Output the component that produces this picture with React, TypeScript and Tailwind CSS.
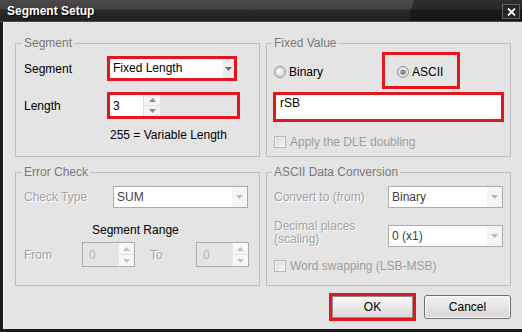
import React from 'react';

const red = 'border-[3px] border-[#e3161e]';
const dim = 'text-[#a3a3a3] [text-shadow:1px_1px_0_#ffffff]';

function Tri({ dir, color }: { dir: 'up' | 'down'; color: string }) {
  return (
    <svg width="7" height="4" viewBox="0 0 7 4">
      <path d={dir === 'up' ? 'M0 4 L3.5 0 L7 4 Z' : 'M0 0 L7 0 L3.5 4 Z'} fill={color} />
    </svg>
  );
}

function Radio({ checked }: { checked?: boolean }) {
  const id = checked ? 'rg-on' : 'rg-off';
  return (
    <svg width="12" height="12" viewBox="0 0 12 12" className="shrink-0">
      <defs>
        <radialGradient id={id} cx="0.4" cy="0.35" r="0.7">
          <stop offset="0" stopColor="#ffffff" />
          <stop offset="1" stopColor="#d6d6d6" />
        </radialGradient>
      </defs>
      <circle cx="6" cy="6" r="5.5" fill="#f2f2f2" stroke="#8c8c8c" />
      <circle cx="6" cy="6" r="4.2" fill={`url(#${id})`} stroke="#c4c4c4" strokeWidth="0.6" />
      {checked && <circle cx="6" cy="6" r="2.6" fill="#7a7a7a" />}
      {checked && <circle cx="5.6" cy="5.6" r="1.1" fill="#a8a8a8" />}
    </svg>
  );
}

function Check() {
  return (
    <div className="w-[12px] h-[12px] shrink-0 border border-[#b9b9b9] bg-[#f0f0f0] p-[1px]">
      <div className="w-full h-full bg-gradient-to-br from-[#dedede] to-[#f2f2f2]" />
    </div>
  );
}

function Combo({ text, className }: { text: string; className: string }) {
  return (
    <div className={`flex h-[22px] border border-[#acacac] bg-white ${className}`}>
      <div className="flex-1 flex items-center pl-[3px] text-[#3f3f3f]">{text}</div>
      <div className="w-[16px] flex items-center justify-center bg-[#f5f5f5] border-l border-white">
        <Tri dir="down" color="#b9b9b9" />
      </div>
    </div>
  );
}

function Spin() {
  return (
    <div className="flex w-[53px] h-[25px] border border-[#adadad]">
      <div className="flex-1 flex items-center pl-[6px] text-[#b4b4b4]">0</div>
      <div className="w-[16px] flex flex-col bg-[#f7f7f7] border-l border-[#e8e8e8]">
        <div className="flex-1 flex items-center justify-center border-b border-[#e2e2e2]">
          <Tri dir="up" color="#c2c2c2" />
        </div>
        <div className="flex-1 flex items-center justify-center">
          <Tri dir="down" color="#c2c2c2" />
        </div>
      </div>
    </div>
  );
}

function Group({ title, pad, children }: { title: string; pad: string; children: React.ReactNode }) {
  return (
    <fieldset className={`h-[121px] border border-[#bfbfbf] ${pad}`}>
      <legend className="px-[2px] -ml-[2px] leading-[14px] text-[#7a7a7a]">{title}</legend>
      {children}
    </fieldset>
  );
}

export default function App() {
  return (
    <div className="w-[522px] h-[332px] flex flex-col bg-[#1c1c1c] overflow-hidden font-['Liberation_Sans',Arial,sans-serif] text-[12px] text-black">
      {/* title bar */}
      <div className="relative h-[22px] shrink-0 flex items-center bg-[linear-gradient(to_bottom,#2e2e2e_0px,#292929_9px,#1b1b1b_10px,#171717_21px)] border-b border-[#4a4a4a]">
        <div className="absolute inset-0 [clip-path:polygon(0_0,414px_0,408px_100%,0_100%)] bg-[linear-gradient(to_bottom,#4a4a4a_0px,#404040_9px,#2a2a2a_10px,#222222_21px)]" />
        <span className="relative ml-[7px] font-bold text-white [text-shadow:1px_1px_0_#000000]">Segment Setup</span>
        <div className="absolute right-[2px] top-[4px] w-[18px] h-[15px] border border-[#606060] bg-[#262626] flex items-center justify-center">
          <svg width="9" height="8" viewBox="0 0 9 8">
            <path d="M1 0.5 L8 7.5 M8 0.5 L1 7.5" stroke="#ffffff" strokeWidth="1.8" />
          </svg>
        </div>
      </div>

      {/* client area */}
      <div className="flex-1 ml-[3px] mb-[3px] bg-[#e4e4e4] border-l border-[#f2f2f2] pl-[11px] pr-[11px] pt-[14px]">
        <div className="flex gap-[6px]">
          {/* left column */}
          <div className="w-[245px] flex flex-col gap-[8px]">
            <Group title="Segment" pad="pl-[8px]">
              <div className="flex items-center mt-[6px]">
                <span className="w-[83px]">Segment</span>
                <div className={`w-[130px] h-[25px] ${red} flex bg-white`}>
                  <span className="flex-1 pl-[3px] leading-[19px]">Fixed Length</span>
                  <div className="w-[12px] bg-[#ececec] border-l border-[#f8f8f8] flex items-center justify-center">
                    <Tri dir="down" color="#6a6a6a" />
                  </div>
                </div>
              </div>
              <div className="flex items-center mt-[11px]">
                <span className="w-[83px]">Length</span>
                <div className={`w-[133px] h-[27px] ${red} flex`}>
                  <div className="w-[33px] bg-white pl-[3px] flex items-center">3</div>
                  <div className="w-[17px] flex flex-col bg-[#f4f4f4] border-l border-[#dedede]">
                    <div className="flex-1 flex items-center justify-center border-b border-[#dedede]">
                      <Tri dir="up" color="#8a8a8a" />
                    </div>
                    <div className="flex-1 flex items-center justify-center">
                      <Tri dir="down" color="#8a8a8a" />
                    </div>
                  </div>
                </div>
              </div>
              <div className="mt-[9px] pl-[86px] leading-[14px]">255 = Variable Length</div>
            </Group>

            <Group title="Error Check" pad="pl-[8px]">
              <div className="flex items-center mt-[7px]">
                <span className={`w-[89px] ${dim}`}>Check Type</span>
                <Combo text="SUM" className="w-[135px]" />
              </div>
              <div className="mt-[15px] pl-[68px] leading-[14px]">Segment Range</div>
              <div className="flex items-center mt-[5px]">
                <span className={`w-[58px] ${dim}`}>From</span>
                <Spin />
                <span className={`ml-[15px] w-[46px] ${dim}`}>To</span>
                <Spin />
              </div>
            </Group>
          </div>

          {/* right column */}
          <div className="w-[245px] flex flex-col gap-[8px]">
            <Group title="Fixed Value" pad="pl-[7px]">
              <div className="flex items-center mt-[2px] h-[37px]">
                <div className="w-[108px] flex items-center gap-[3px] pt-[2px]">
                  <Radio />
                  <span>Binary</span>
                </div>
                <div className={`w-[78px] h-[37px] ${red} flex items-center gap-[3px] pl-[12px] pt-[2px]`}>
                  <Radio checked />
                  <span>ASCII</span>
                </div>
              </div>
              <div className={`mt-[3px] -ml-[1px] w-[231px] h-[30px] ${red} bg-white pl-[4px] pt-[1px] leading-[14px]`}>
                rSB
              </div>
              <div className="flex items-center mt-[14px] h-[12px]">
                <Check />
                <span className="ml-[4px] text-[#9e9e9e]">Apply the DLE doubling</span>
              </div>
            </Group>

            <Group title="ASCII Data Conversion" pad="pl-[7px]">
              <div className="flex items-center mt-[7px]">
                <span className={`w-[114px] ${dim}`}>Convert to (from)</span>
                <Combo text="Binary" className="w-[115px]" />
              </div>
              <div className="flex items-start mt-[12px]">
                <span className={`w-[114px] leading-[13px] ${dim}`}>
                  Decimal places
                  <br />
                  (scaling)
                </span>
                <Combo text="0 (x1)" className="w-[115px] mt-[5px]" />
              </div>
              <div className="flex items-center mt-[13px] h-[12px]">
                <Check />
                <span className="ml-[4px] text-[#9e9e9e]">Word swapping (LSB-MSB)</span>
              </div>
            </Group>
          </div>
        </div>

        {/* buttons */}
        <div className="flex justify-end items-center gap-[8px] mt-[7px]">
          <div className={`w-[87px] h-[28px] ${red}`}>
            <div className="w-full h-full border border-[#8f8f8f] bg-gradient-to-b from-[#f7f7f7] to-[#dadada] flex items-center justify-center">
              OK
            </div>
          </div>
          <div className="w-[87px] h-[24px] border border-[#707070] rounded-[3px] bg-gradient-to-b from-[#f3f3f3] to-[#d6d6d6] shadow-[inset_0_0_0_1px_#fbfbfb] flex items-center justify-center">
            Cancel
          </div>
        </div>
      </div>
    </div>
  );
}
